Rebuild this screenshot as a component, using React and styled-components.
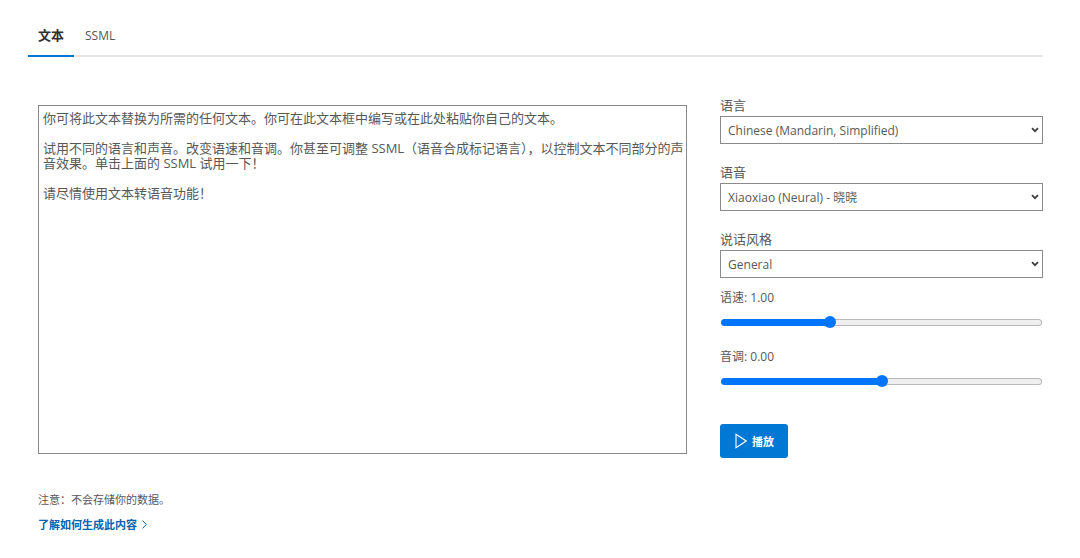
import React, { useState } from "react";
import styled, { createGlobalStyle } from "styled-components";

const GlobalStyle = createGlobalStyle`
  *, *::before, *::after { box-sizing: border-box; }
  body {
    margin: 0;
    background: #fff;
    color: #585858;
    font: 13px/15px "Open Sans", "Noto Sans CJK SC", sans-serif;
  }
  button, select, textarea { font: inherit; color: inherit; }
`;

const Page = styled.main`
  padding: 20px 37px 20px 28px;
`;

const TabList = styled.div`
  display: flex;
  gap: 1px;
  border-bottom: 2px solid #e6e6e6;
`;

const Tab = styled.button`
  height: 37px;
  margin-bottom: -2px;
  padding: 0 10px 5px;
  border: 0;
  border-bottom: 2px solid ${(p) => (p.$active ? "#0078d4" : "transparent")};
  background: none;
  font-size: ${(p) => (p.$active ? 13 : 12)}px;
  font-weight: ${(p) => (p.$active ? 700 : 400)};
  color: ${(p) => (p.$active ? "#303030" : "#585858")};
  cursor: pointer;
`;

const Panel = styled.section`
  padding: 41px 0 0 10px;
`;

const Columns = styled.div`
  display: grid;
  grid-template-columns: 201fr 100fr;
  gap: 33px;
`;

const Editor = styled.textarea`
  display: block;
  width: 100%;
  height: 349px;
  margin-top: 7px;
  padding: 5px 0 5px 4px;
  border: 1px solid #8a8a8a;
  border-radius: 0;
  background: #fff;
  resize: none;
  outline: none;
`;

const Settings = styled.form`
  display: flex;
  flex-direction: column;
  align-items: stretch;
`;

const Field = styled.div`
  display: flex;
  flex-direction: column;
  gap: 3px;
  margin-bottom: ${(p) => (p.$last ? 12 : 21)}px;
`;

const Label = styled.label`
  display: block;
  line-height: 15px;
`;

const SelectFrame = styled.div`
  display: grid;
  align-items: center;
`;

const Select = styled.select`
  grid-area: 1 / 1;
  width: 100%;
  height: 28px;
  padding: 0 24px 0 7px;
  border: 1px solid #8a8a8a;
  border-radius: 0;
  background: #fff;
  appearance: none;
  font-size: 12px;
`;

const Chevron = styled.svg`
  grid-area: 1 / 1;
  justify-self: end;
  margin-right: 4px;
  pointer-events: none;
`;

const SliderField = styled.div`
  display: flex;
  flex-direction: column;
  gap: 11px;
  margin-bottom: 21px;
`;

const SliderLabel = styled(Label)`
  font-size: 12px;
`;

const Slider = styled.input`
  display: block;
  width: 100%;
  height: 12px;
  margin: 0;
  padding: 0 1px;
  appearance: none;
  background: none;

  &::-webkit-slider-runnable-track {
    height: 7px;
    border: 1px solid transparent;
    border-radius: 4px;
    background:
      linear-gradient(to right, #0075ff var(--fill), transparent var(--fill)) border-box,
      linear-gradient(#efefef, #efefef) padding-box,
      linear-gradient(#b9b9b9, #b9b9b9) border-box;
  }

  &::-webkit-slider-thumb {
    appearance: none;
    width: 12px;
    height: 12px;
    margin-top: -4px;
    border: 0;
    border-radius: 50%;
    background: #0075ff;
  }
`;

const PlayButton = styled.button`
  display: flex;
  align-items: center;
  align-self: flex-start;
  gap: 5px;
  height: 34px;
  margin-top: 16px;
  padding: 0 14px 0 15px;
  border: 0;
  border-radius: 3px;
  background: #0078d4;
  color: #fff;
  font-size: 11px;
  font-weight: 700;
  cursor: pointer;
`;

const Note = styled.p`
  margin: 34px 0 10px;
  font-size: 11px;
  line-height: 15px;
`;

const LearnLink = styled.a`
  display: inline-flex;
  align-items: center;
  gap: 5px;
  color: #0062ad;
  font-size: 11px;
  font-weight: 700;
  text-decoration: none;
`;

const SAMPLE = `你可将此文本替换为所需的任何文本。你可在此文本框中编写或在此处粘贴你自己的文本。

试用不同的语言和声音。改变语速和音调。你甚至可调整 SSML（语音合成标记语言），以控制文本不同部分的声音效果。单击上面的 SSML 试用一下！

请尽情使用文本转语音功能！`;

const FIELDS = [
  { id: "language", label: "语言", option: "Chinese (Mandarin, Simplified)" },
  { id: "voice", label: "语音", option: "Xiaoxiao (Neural) - 晓晓" },
  { id: "style", label: "说话风格", option: "General" },
];

function SelectField({ id, label, option, last }) {
  return (
    <Field $last={last}>
      <Label htmlFor={id}>{label}</Label>
      <SelectFrame>
        <Select id={id}>
          <option>{option}</option>
        </Select>
        <Chevron width="8" height="6" viewBox="0 0 8 6" aria-hidden="true">
          <path d="M1 1.2 4 4.2 7 1.2" fill="none" stroke="#3c3c3c" strokeWidth="1.7" />
        </Chevron>
      </SelectFrame>
    </Field>
  );
}

function RangeField({ id, label, min, max, initial }) {
  const [value, setValue] = useState(initial);
  const fill = `${((value - min) / (max - min)) * 100}%`;
  return (
    <SliderField>
      <SliderLabel htmlFor={id}>
        {label}: {value.toFixed(2)}
      </SliderLabel>
      <Slider
        id={id}
        type="range"
        min={min}
        max={max}
        step="0.01"
        value={value}
        onChange={(e) => setValue(Number(e.target.value))}
        style={{ "--fill": fill }}
      />
    </SliderField>
  );
}

export default function App() {
  const [tab, setTab] = useState("text");
  return (
    <>
      <GlobalStyle />
      <Page lang="zh-CN">
        <TabList role="tablist">
          <Tab role="tab" aria-selected={tab === "text"} $active={tab === "text"} onClick={() => setTab("text")}>
            文本
          </Tab>
          <Tab role="tab" aria-selected={tab === "ssml"} $active={tab === "ssml"} onClick={() => setTab("ssml")}>
            SSML
          </Tab>
        </TabList>
        <Panel role="tabpanel">
          <Columns>
            <div>
              <Editor aria-label="文本" defaultValue={SAMPLE} spellCheck={false} />
            </div>
            <Settings onSubmit={(e) => e.preventDefault()}>
              {FIELDS.map((f, i) => (
                <SelectField key={f.id} {...f} last={i === FIELDS.length - 1} />
              ))}
              <RangeField id="rate" label="语速" min={0} max={3} initial={1} />
              <RangeField id="pitch" label="音调" min={-1} max={1} initial={0} />
              <PlayButton type="submit">
                <svg width="12" height="16" viewBox="0 0 12 16" aria-hidden="true">
                  <path d="M1 1.2V14.8L11.2 8Z" fill="none" stroke="#fff" strokeWidth="1.1" />
                </svg>
                播放
              </PlayButton>
            </Settings>
          </Columns>
          <Note>注意：不会存储你的数据。</Note>
          <LearnLink href="#learn">
            了解如何生成此内容
            <svg width="5" height="9" viewBox="0 0 5 9" aria-hidden="true">
              <path d="M.6.6 4.3 4.5.6 8.4" fill="none" stroke="currentColor" strokeWidth="1" />
            </svg>
          </LearnLink>
        </Panel>
      </Page>
    </>
  );
}
